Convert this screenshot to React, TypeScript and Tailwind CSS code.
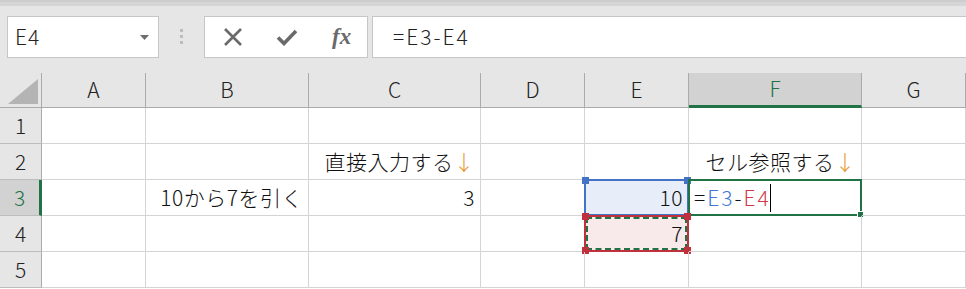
import React from "react";

const cols = ["A", "B", "C", "D", "E", "F", "G"];
const font = { fontFamily: '"Noto Sans CJK JP", "Noto Sans", sans-serif' };

function Corner() {
  return (
    <div className="relative h-[35px] border-r border-b border-[#ababab] bg-[#e6e6e6]">
      <svg className="absolute right-[3px] bottom-[3px]" width="30" height="25" viewBox="0 0 30 25">
        <polygon points="30,0 30,25 0,25" fill="#b4b4b4" />
      </svg>
    </div>
  );
}

function ColHead({ label }: { label: string }) {
  const active = label === "F";
  return (
    <div
      className={
        "flex h-[35px] items-center justify-center border-r text-[21px] font-light " +
        (active
          ? "border-b-[3px] border-r-[#ababab] border-b-[#217346] bg-[#d2d2d2] text-[#217346]"
          : "border-b border-[#ababab] bg-[#e6e6e6] text-[#222]")
      }
    >
      {label}
    </div>
  );
}

function RowHead({ n }: { n: number }) {
  const active = n === 3;
  return (
    <div
      className={
        "flex h-[36px] items-center justify-center border-b text-[21px] font-light " +
        (active
          ? "border-r-[3px] border-b-[#bdbdbd] border-r-[#217346] bg-[#d2d2d2] text-[#217346]"
          : "border-r border-b-[#bdbdbd] border-r-[#ababab] bg-[#e6e6e6] text-[#222]")
      }
    >
      {n}
    </div>
  );
}

function Arrow() {
  return <span className="text-[#e8962e]">↓</span>;
}

function Cell({ children, className = "" }: { children?: React.ReactNode; className?: string }) {
  return (
    <div
      className={
        "relative flex h-[36px] items-center justify-end border-r border-b border-[#d4d4d4] pr-[5px] text-[21px] font-light tracking-[0.5px] text-[#111] " +
        className
      }
    >
      {children}
    </div>
  );
}

function Handle({ pos, color }: { pos: string; color: string }) {
  return <span className={"absolute h-[7px] w-[7px] " + pos + " " + color} />;
}

export default function App() {
  const rows: Record<number, Record<string, React.ReactNode>> = {
    2: {
      C: (
        <>
          直接入力する
          <Arrow />
        </>
      ),
      F: (
        <>
          セル参照する
          <Arrow />
        </>
      ),
    },
    3: { B: "10から7を引く", C: "3" },
  };

  return (
    <div className="h-[289px] w-[966px] overflow-hidden bg-white" style={font}>
      {/* formula bar */}
      <div className="h-[73px] bg-[#e6e6e6]">
        <div className="h-[2px] bg-[#cdcdcd]" />
        <div className="h-[4px] bg-[#d6d6d6]" />
        <div className="flex items-start pt-[10px]">
          <div className="ml-[7px] flex h-[42px] w-[152px] items-center justify-between border border-[#c6c6c6] bg-white pl-[7px] pr-[9px]">
            <span className="text-[21px] font-light tracking-[1px] text-[#222]">E4</span>
            <svg width="9" height="5" viewBox="0 0 9 5">
              <polygon points="0,0 9,0 4.5,5" fill="#6d6d6d" />
            </svg>
          </div>
          <div className="mx-[21px] mt-[13px] flex flex-col gap-[3px]">
            <span className="h-[3px] w-[3px] bg-[#bdbdbd]" />
            <span className="h-[3px] w-[3px] bg-[#bdbdbd]" />
            <span className="h-[3px] w-[3px] bg-[#bdbdbd]" />
          </div>
          <div className="flex h-[42px] w-[164px] items-center border border-[#c6c6c6] bg-white">
            <svg className="ml-[18px]" width="20" height="20" viewBox="0 0 20 20">
              <path d="M2 2 L18 18 M18 2 L2 18" stroke="#6a6a6a" strokeWidth="2.6" />
            </svg>
            <svg className="ml-[33px]" width="22" height="17" viewBox="0 0 22 17">
              <path d="M2 8.5 L8 14.5 L20 2" stroke="#6a6a6a" strokeWidth="3.6" fill="none" />
            </svg>
            <span
              className="ml-[34px] text-[23px] font-bold italic text-[#6a6a6a]"
              style={{ fontFamily: '"Liberation Serif", serif' }}
            >
              fx
            </span>
          </div>
          <div className="ml-[4px] flex h-[42px] flex-1 items-center border border-r-0 border-[#c6c6c6] bg-white pl-[20px] text-[21px] font-light tracking-[2px] text-[#222]">
            =E3-E4
          </div>
        </div>
      </div>

      {/* grid */}
      <div className="grid grid-cols-[42px_104px_163px_172px_104px_104px_173px_104px]">
        <Corner />
        {cols.map((c) => (
          <ColHead key={c} label={c} />
        ))}
        {[1, 2, 3, 4, 5].map((r) => (
          <React.Fragment key={r}>
            <RowHead n={r} />
            {cols.map((c) => {
              const content = rows[r]?.[c];
              if (r === 3 && c === "E") {
                return (
                  <Cell key={c} className="bg-[#e8eef9]">
                    <span className="absolute -top-px -left-px h-[37px] w-[105px] border-2 border-[#4472c4]" />
                    <Handle pos="-top-[3px] -left-[3px]" color="bg-[#4472c4]" />
                    <Handle pos="-top-[3px] -right-[3px]" color="bg-[#4472c4]" />
                    <span className="relative">10</span>
                  </Cell>
                );
              }
              if (r === 4 && c === "E") {
                return (
                  <Cell key={c} className="bg-[#f8eaea]">
                    <span className="absolute -top-px -left-px h-[37px] w-[105px] border-2 border-[#c0313d]" />
                    <span className="absolute top-[1px] left-[1px] h-[33px] w-[101px] border-2 border-dashed border-[#217346]" />
                    <Handle pos="-top-[3px] -left-[3px]" color="bg-[#c0313d]" />
                    <Handle pos="-top-[3px] -right-[3px]" color="bg-[#c0313d]" />
                    <Handle pos="-bottom-[3px] -left-[3px]" color="bg-[#c0313d]" />
                    <Handle pos="-bottom-[3px] -right-[3px]" color="bg-[#c0313d]" />
                    <span className="relative">7</span>
                  </Cell>
                );
              }
              if (r === 3 && c === "F") {
                return (
                  <Cell key={c} className="justify-start pl-[5px] tracking-[2px]">
                    <span className="absolute -top-px -left-px h-[37px] w-[174px] border-2 border-[#217346]" />
                    <span className="absolute -right-[3px] -bottom-[3px] h-[7px] w-[7px] border border-white bg-[#217346]" />
                    <span className="relative">
                      <span className="text-[#111]">=</span>
                      <span className="text-[#3f76d6]">E3</span>
                      <span className="text-[#111]">-</span>
                      <span className="text-[#d0384a]">E4</span>
                    </span>
                    <span className="relative -ml-[1px] h-[28px] w-px bg-black" />
                  </Cell>
                );
              }
              return <Cell key={c}>{content}</Cell>;
            })}
          </React.Fragment>
        ))}
      </div>
    </div>
  );
}
